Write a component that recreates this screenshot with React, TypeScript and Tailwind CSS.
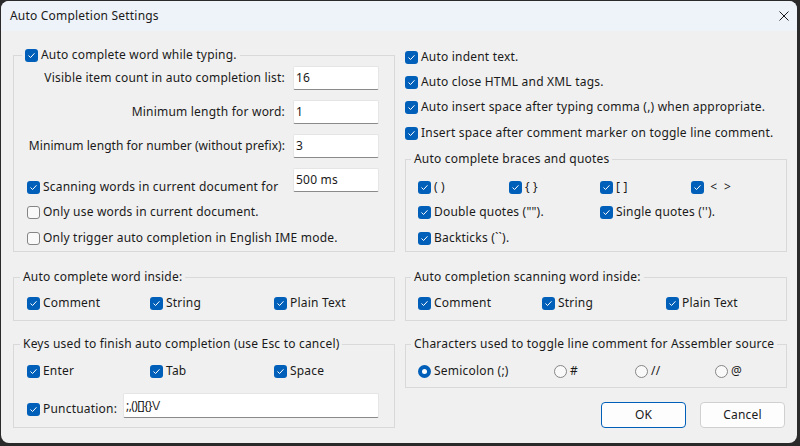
import React from 'react';

const FONT: React.CSSProperties = { fontFamily: '"Noto Sans", "Open Sans", sans-serif' };

function Check({ checked = true }: { checked?: boolean }) {
  if (!checked) {
    return <span className="w-[13px] h-[13px] rounded-[3px] border border-[#858585] bg-[#f9f9f9] shrink-0 block" />;
  }
  return (
    <span className="w-[13px] h-[13px] rounded-[3px] bg-[#005fb8] shrink-0 flex items-center justify-center">
      <svg width="13" height="13" viewBox="0 0 13 13">
        <path d="M3.8 6.8 L5.6 8.5 L9.2 4.6" stroke="white" strokeWidth="1" fill="none" strokeLinecap="round" strokeLinejoin="round" />
      </svg>
    </span>
  );
}

function CB({ label, checked = true }: { label: string; checked?: boolean }) {
  return (
    <div className="flex items-center gap-[3px] h-[16px] whitespace-nowrap">
      <Check checked={checked} />
      <span>{label}</span>
    </div>
  );
}

function Radio({ label, checked = false }: { label: string; checked?: boolean }) {
  return (
    <div className="flex items-center gap-[3px] h-[16px] whitespace-nowrap">
      {checked ? (
        <span className="w-[13px] h-[13px] rounded-full bg-[#005fb8] shrink-0 flex items-center justify-center">
          <span className="w-[5px] h-[5px] rounded-full bg-white block" />
        </span>
      ) : (
        <span className="w-[13px] h-[13px] rounded-full border border-[#858585] bg-[#f9f9f9] shrink-0 block" />
      )}
      <span>{label}</span>
    </div>
  );
}

function Field({ value, className = '' }: { value: string; className?: string }) {
  return (
    <div
      className={
        'h-[24px] bg-white border border-[#e5e5e5] border-b-[#8a8a8a] rounded-[2px] pl-[2px] flex items-center whitespace-nowrap shrink-0 ' +
        className
      }
    >
      {value}
    </div>
  );
}

function Group({
  legend,
  legendClass,
  bodyClass,
  className = '',
  children,
}: {
  legend: React.ReactNode;
  legendClass: string;
  bodyClass: string;
  className?: string;
  children: React.ReactNode;
}) {
  return (
    <fieldset className={'border border-[#d9d9d9] min-w-0 ' + className}>
      <legend className={'px-[3px] whitespace-nowrap ' + legendClass}>{legend}</legend>
      <div className={bodyClass}>{children}</div>
    </fieldset>
  );
}

function LabeledField({ label, value, labelClass = '' }: { label: string; value: string; labelClass?: string }) {
  return (
    <div className="flex items-center">
      <div className="flex-1 min-w-0 flex justify-end">
        <span className={'whitespace-nowrap shrink-0 ' + labelClass}>{label}</span>
      </div>
      <Field value={value} className="w-[86px] ml-[8px]" />
    </div>
  );
}

export default function App() {
  return (
    <div className="w-[800px] h-[446px] bg-[#2a2a2a] pt-[1px] pl-[1px]" style={FONT}>
      <div className="w-[796px] h-[442px] rounded-[8px] overflow-hidden bg-[#f0f0f0] flex flex-col text-[#1a1a1a] text-[12px] tracking-[0.2px] leading-[16px]">
        {/* Title bar */}
        <div className="h-[30px] bg-[#eef3f9] flex items-center justify-between pl-[9px] pr-[8px] shrink-0">
          <span>Auto Completion Settings</span>
          <svg width="10" height="10" viewBox="0 0 10 10">
            <path d="M0.5 0.5 L9.5 9.5 M9.5 0.5 L0.5 9.5" stroke="#1a1a1a" strokeWidth="1" />
          </svg>
        </div>

        {/* Body */}
        <div className="flex gap-[10px] pl-[12px]">
          {/* Left column */}
          <div className="w-[382px] flex flex-col pt-[16px]">
            <Group
              legend={<CB label="Auto complete word while typing." />}
              legendClass="ml-[8px]"
              bodyClass="pl-[13px] pr-[15px] pb-[5px]"
            >
              <div className="mt-[3px]">
                <LabeledField label="Visible item count in auto completion list:" value="16" />
              </div>
              <div className="mt-[10px]">
                <LabeledField label="Minimum length for word:" value="1" />
              </div>
              <div className="mt-[10px]">
                <LabeledField
                  label="Minimum length for number (without prefix):"
                  value="3"
                  labelClass="tracking-[0.05px]"
                />
              </div>
              <div className="flex items-start mt-[10px]">
                <div className="flex-1 min-w-0 mt-[11px]">
                  <CB label="Scanning words in current document for" />
                </div>
                <Field value="500 ms" className="w-[86px] ml-[8px]" />
              </div>
              <div className="mt-[9px]">
                <CB label="Only use words in current document." checked={false} />
              </div>
              <div className="mt-[10px]">
                <CB label="Only trigger auto completion in English IME mode." checked={false} />
              </div>
            </Group>

            <Group
              legend="Auto complete word inside:"
              legendClass="ml-[6px]"
              bodyClass="pl-[13px] pb-[9px]"
              className="mt-[17px]"
            >
              <div className="grid grid-cols-[123px_124px_auto] mt-[10px]">
                <CB label="Comment" />
                <CB label="String" />
                <CB label="Plain Text" />
              </div>
            </Group>

            <Group
              legend="Keys used to finish auto completion (use Esc to cancel)"
              legendClass="ml-[6px]"
              bodyClass="pl-[13px] pr-[15px] pb-[9px]"
              className="mt-[15px]"
            >
              <div className="grid grid-cols-[123px_124px_auto] mt-[11px]">
                <CB label="Enter" />
                <CB label="Tab" />
                <CB label="Space" />
              </div>
              <div className="flex items-start mt-[14px]">
                <div className="mt-[8px]">
                  <CB label="Punctuation:" />
                </div>
                <Field value=";,()[]{}\/" className="flex-1 shrink ml-[6px] h-[25px] tracking-[-0.6px]" />
              </div>
            </Group>
          </div>

          {/* Right column */}
          <div className="w-[382px] flex flex-col pt-[18px]">
            <CB label="Auto indent text." />
            <div className="mt-[9px]">
              <CB label="Auto close HTML and XML tags." />
            </div>
            <div className="mt-[9px]">
              <CB label="Auto insert space after typing comma (,) when appropriate." />
            </div>
            <div className="mt-[10px]">
              <CB label="Insert space after comment marker on toggle line comment." />
            </div>

            <Group
              legend="Auto complete braces and quotes"
              legendClass="ml-[5px]"
              bodyClass="pl-[12px] pb-[5px]"
              className="mt-[10px]"
            >
              <div className="grid grid-cols-[91px_91px_91px_auto] mt-[12px]">
                <CB label="( )" />
                <CB label="{ }" />
                <CB label="[ ]" />
                <CB label={'\u00a0<\u00a0\u00a0>'} />
              </div>
              <div className="grid grid-cols-[182px_auto] mt-[9px]">
                <CB label={'Double quotes ("").'} />
                <CB label={"Single quotes ('')."} />
              </div>
              <div className="mt-[10px]">
                <CB label="Backticks (``)." />
              </div>
            </Group>

            <Group
              legend="Auto completion scanning word inside:"
              legendClass="ml-[5px]"
              bodyClass="pl-[12px] pb-[9px]"
              className="mt-[17px]"
            >
              <div className="grid grid-cols-[124px_124px_auto] mt-[10px]">
                <CB label="Comment" />
                <CB label="String" />
                <CB label="Plain Text" />
              </div>
            </Group>

            <Group
              legend="Characters used to toggle line comment for Assembler source"
              legendClass="ml-[5px]"
              bodyClass="pl-[12px] pb-[8px]"
              className="mt-[15px]"
            >
              <div className="grid grid-cols-[136px_81px_80px_auto] mt-[11px]">
                <Radio label="Semicolon (;)" checked />
                <Radio label="#" />
                <Radio label="//" />
                <Radio label="@" />
              </div>
            </Group>

            <div className="flex justify-end gap-[14px] mt-[14px] pr-[2px]">
              <button className="w-[85px] h-[26px] rounded-[4px] bg-[#fdfdfd] border border-[#005fb8] text-[#1a1a1a]">OK</button>
              <button className="w-[85px] h-[26px] rounded-[4px] bg-[#fdfdfd] border border-[#d0d0d0] text-[#1a1a1a]">Cancel</button>
            </div>
          </div>
        </div>
      </div>
    </div>
  );
}
